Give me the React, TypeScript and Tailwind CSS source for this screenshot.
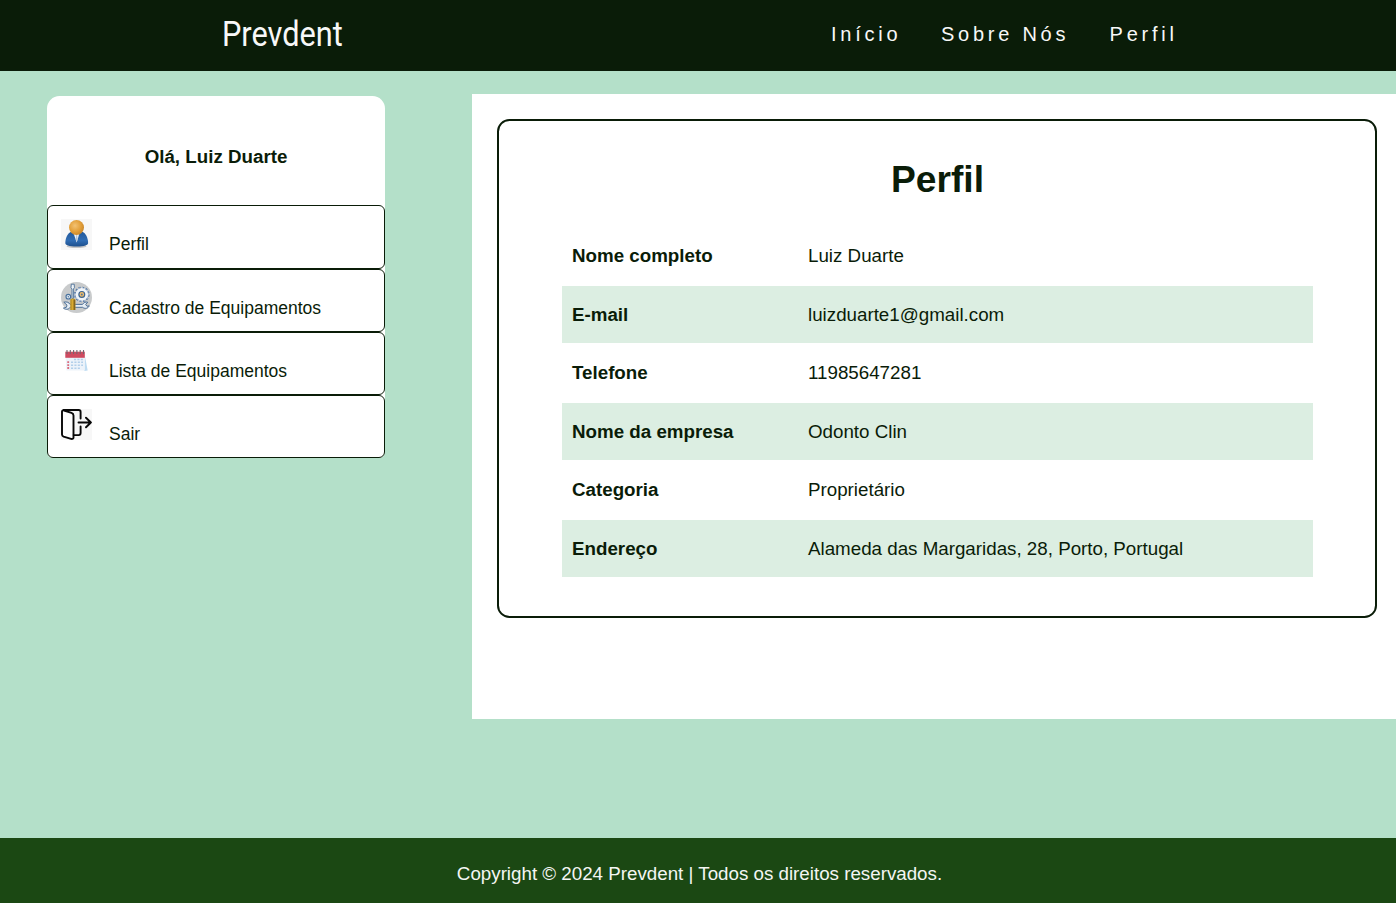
import React from "react";

const PersonIcon = () => (
  <svg width="31" height="31" viewBox="0 0 31 31">
    <defs>
      <radialGradient id="head" cx="40%" cy="38%" r="65%">
        <stop offset="0" stopColor="#f3c273" />
        <stop offset="0.6" stopColor="#e3a03a" />
        <stop offset="1" stopColor="#c8862a" />
      </radialGradient>
      <linearGradient id="body" x1="0" y1="0" x2="0" y2="1">
        <stop offset="0" stopColor="#23599a" />
        <stop offset="0.6" stopColor="#2f6cb3" />
        <stop offset="1" stopColor="#1d4f8c" />
      </linearGradient>
    </defs>
    <rect width="31" height="31" fill="#f7f7f7" />
    <ellipse cx="15.5" cy="27.2" rx="10" ry="1.7" fill="#c4c4c4" />
    <path d="M4.300 24C4.300 18.500 7 14 10 12.700h11.500c3 1.300 5.600 5.800 5.600 11.300 0 2.300-3.500 3.500-11.400 3.500S4.300 26.300 4.300 24z" fill="url(#body)" />
    <path d="M12.600 14.500h5.800l-2.700 9z" fill="#eef3f8" />
    <path d="M15.200 16h.9l.5 4.500-.9 2.500-.9-2.500z" fill="#b5c4d6" />
    <circle cx="15.500" cy="8.500" r="7.500" fill="url(#head)" />
  </svg>
);

const ToolsIcon = () => (
  <svg width="31" height="31" viewBox="0 0 31 31">
    <circle cx="15.500" cy="15.500" r="15.500" fill="#c9cbcc" />
    <circle cx="20.800" cy="12.400" r="6.700" fill="none" stroke="#4a70a0" strokeWidth="2.100" strokeDasharray="2.100 1.408" />
    <circle cx="20.800" cy="12.400" r="6.300" fill="#f0f5fa" />
    <circle cx="20.800" cy="12.400" r="6.900" fill="none" stroke="#f0f5fa" strokeWidth="0.700" strokeDasharray="1.300 2.313" />
    <circle cx="20.800" cy="12.400" r="2.900" fill="#f3bd68" stroke="#3c6593" strokeWidth="1.200" />
    <circle cx="20.800" cy="12.400" r="1" fill="#55789f" />
    <circle cx="7.300" cy="14.700" r="2.300" fill="#e7eef4" stroke="#48709d" strokeWidth="1.100" />
    <circle cx="7.300" cy="14.700" r="0.700" fill="#48709d" />
    <path d="M2.800 20.200c3-.8 5.400.3 6.200 2.200h12.500c1.200-2 3.200-2.700 5.200-2.200l-2 2.300 1.300 1.800 2.200-.5c-.8 2.600-4.400 3.400-6.600 1.500H9.200c-1.500 2.400-5 2.500-6.800.8l3-.8.600-2.200z" fill="#e6edf4" stroke="#3e6490" strokeWidth="0.900" />
    <path d="M10.300 2.200h2.900l.2 3.500-1 1.300v9.500h-1.400V7L10 5.700z" fill="#eef3f7" stroke="#3e6490" strokeWidth="0.800" />
    <path d="M9.300 18c0-2 5-2 5 0v10h-5z" fill="#d8aa30" />
    <path d="M12.500 17.500h1.800V28h-1.800z" fill="#86661c" />
    <path d="M10 17v11" stroke="#9b7824" strokeWidth="0.700" />
  </svg>
);

const CalendarIcon = () => (
  <svg width="31" height="31" viewBox="0 0 31 31">
    <path d="M23.500 9l3.200 16.500-3.500.5z" fill="#bfdcf2" />
    <path d="M4.500 10h19.300l.1 15.500H5.500z" fill="#edf3fa" />
    <path d="M4.300 6.700h19.500v6.100H4.300z" fill="#cf4a60" />
    <path d="M6 4.900v4M9.300 4.900v4M12.600 4.900v4M15.900 4.900v4M19.200 4.900v4M22.500 4.900v4" stroke="#75646f" strokeWidth="1.100" />
    <path d="M10 17.300h12M10 20.300h12M10 23.300h9M13 14.600h9" stroke="#b2cfea" strokeWidth="1.500" strokeDasharray="2.100 1.300" />
    <path d="M7.200 16.300v7.700" stroke="#dc6b7c" strokeWidth="1.800" strokeDasharray="1.800 1.100" />
  </svg>
);

const ExitIcon = () => (
  <svg width="31" height="31" viewBox="0 0 31 31">
    <rect width="31" height="31" fill="#f7f7f7" />
    <path d="M1 1.500l11 3v25.300L1 27z" fill="#fff" />
    <g fill="none" stroke="#080808" strokeWidth="1.900" strokeLinecap="round" strokeLinejoin="round">
      <path d="M1 2.500v23c0 1.200.6 1.800 1.600 2.200l7.500 2.200c1.400.3 2.400-.2 2.400-1.500V6.400c0-1.500-.7-2.200-2-2.600L3 1.500C1.800 1.200 1 1.500 1 2.500z" />
      <path d="M2.500 1h15.200c1.300 0 1.900.7 1.900 1.900v6.600M19.600 17.500v6.600c0 1.300-.6 2-1.900 2h-5" />
      <path d="M17.500 13.500h12.400M25 8.700l4.900 4.800-4.900 4.800" />
    </g>
  </svg>
);

const menu = [
  { label: "Perfil", Icon: PersonIcon },
  { label: "Cadastro de Equipamentos", Icon: ToolsIcon },
  { label: "Lista de Equipamentos", Icon: CalendarIcon },
  { label: "Sair", Icon: ExitIcon },
];

const fields = [
  ["Nome completo", "Luiz Duarte"],
  ["E-mail", "luizduarte1@gmail.com"],
  ["Telefone", "11985647281"],
  ["Nome da empresa", "Odonto Clin"],
  ["Categoria", "Proprietário"],
  ["Endereço", "Alameda das Margaridas, 28, Porto, Portugal"],
];

export default function App() {
  return (
    <div className="flex h-[903px] w-[1396px] flex-col overflow-hidden bg-[#b4e0c9] font-['Liberation_Sans',Arial,sans-serif] text-[18.75px] text-[#0a1c08]">
      <header className="flex h-[71px] shrink-0 items-start bg-[#0a1c08] pl-[222px] text-[#f8f8f8]">
        <div className="w-[609px] pt-[13px]">
          <span className="inline-block origin-left scale-x-[0.893] font-['Roboto',sans-serif] text-[34.4px] leading-[42px]">Prevdent</span>
        </div>
        <nav className="flex pt-[22px] text-[20px] leading-6 tracking-[3.75px]">
          <a className="w-[110px] whitespace-nowrap">Início</a>
          <a className="w-[168.6px] whitespace-nowrap">Sobre Nós</a>
          <a className="whitespace-nowrap">Perfil</a>
        </nav>
      </header>

      <div className="flex h-[767px] shrink-0 items-start pl-[47px]">
        <aside className="mt-[25px] w-[338px] shrink-0 rounded-t-[12.5px] rounded-b-[6px] bg-white">
          <h3 className="flex h-[109.4px] items-center justify-center pt-[12px] font-bold">Olá, Luiz Duarte</h3>
          <ul>
            {menu.map(({ label, Icon }) => (
              <li key={label} className="flex h-[63.15px] rounded-[6px] border border-[#0a1c08] pl-[13px] text-[17.5px]">
                <span className="mt-[12.7px] w-[48px]">
                  <Icon />
                </span>
                <a className="mt-[27px] leading-[22px]">{label}</a>
              </li>
            ))}
          </ul>
        </aside>

        <main className="mt-[23px] ml-[87px] h-[625px] w-[924px] shrink-0 bg-white pt-[25px] pl-[25px]">
          <section className="h-[499px] w-[880px] rounded-[12.5px] border-2 border-[#0a1c08] pr-[62px] pl-[63px]">
            <h1 className="pt-[36px] text-center text-[37.2px] leading-[44px] font-bold">Perfil</h1>
            <dl className="mt-[26.5px] flex flex-col gap-[1.5px]">
              {fields.map(([name, value]) => (
                <div key={name} className="flex h-[57px] items-center pl-[10px] even:bg-[#dceee2] even:pt-px">
                  <dt className="w-[236px] font-bold">{name}</dt>
                  <dd>{value}</dd>
                </div>
              ))}
            </dl>
          </section>
        </main>
      </div>

      <footer className="flex h-[65px] shrink-0 items-center justify-center bg-[#1b4813] pt-[8px] pl-[3px] text-[#f4f6f3]">
        Copyright © 2024 Prevdent | Todos os direitos reservados.
      </footer>
    </div>
  );
}
